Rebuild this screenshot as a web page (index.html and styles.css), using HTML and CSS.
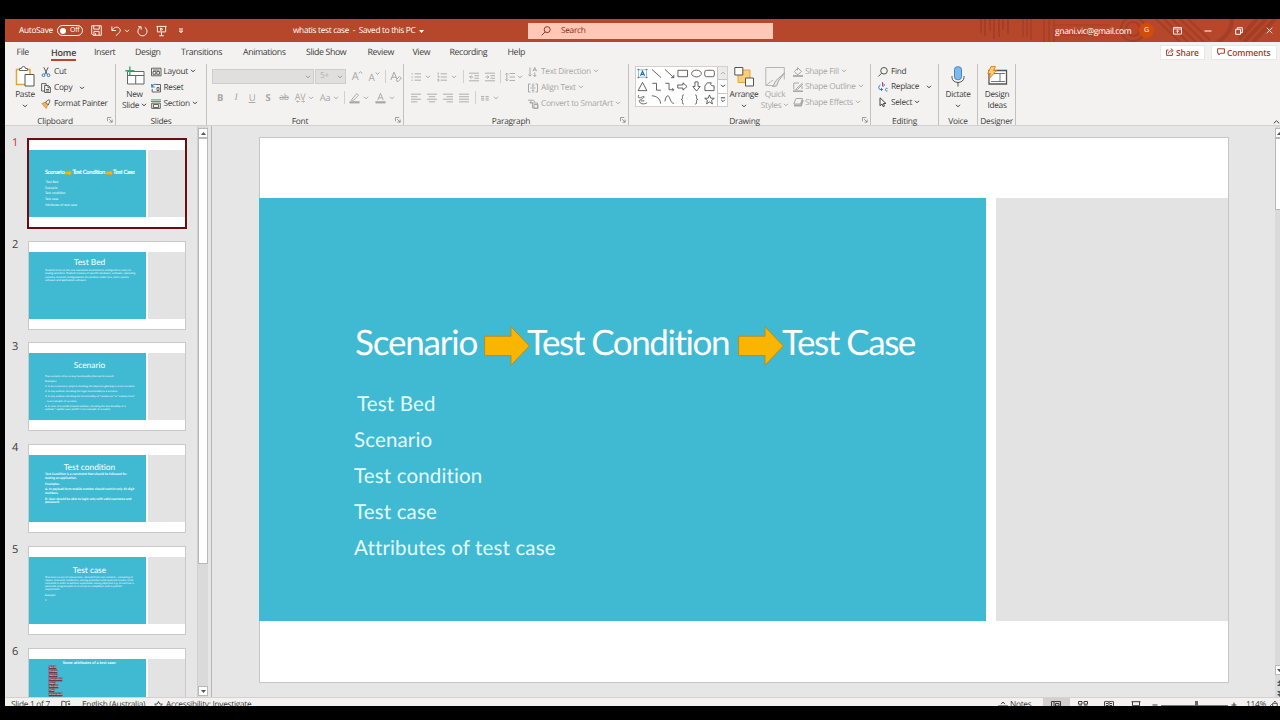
FILE: index.html
```html
<!DOCTYPE html>
<html lang="en">

<head>
	<meta charset="UTF-8">
	<meta name="viewport" content="width=device-width, initial-scale=1.0">
	<title>whatis test case - PowerPoint</title>
	<link rel="stylesheet" href="styles.css">
</head>

<body>
	<svg class="defs">
		<symbol id="chev" viewBox="0 0 6 4"><path d="M1 .8l2 2 2-2" /></symbol>
		<symbol id="launch" viewBox="0 0 7 7"><path d="M.5 5V.5H5M2.5 2.5l3.5 3.5M6 3v3H3" /></symbol>
		<symbol id="arrow" viewBox="0 0 46 40"><path d="M.6 10.2h26.4V.8L45.4 20 27 39.2V29.6H.6z" /></symbol>
	</svg>

	<div class="window">
		<header class="titlebar">
			<svg class="titlebar-art" viewBox="0 0 310 23">
				<g stroke="#9c3d24" stroke-width="2">
					<path d="M11 0v14M15 0v17M20 0v12M24 0v20M29 0v18M33 0v11M38 0v15" />
					<path d="M53 0v18M57 0v18M61 0v21M74 0v23M79 0v23M84 0v23" opacity=".8" />
				</g>
				<g fill="none" stroke="#9c3d24" stroke-width="2">
					<circle cx="163" cy="10" r="12" /><circle cx="163" cy="10" r="7" />
					<path d="M85 6h55M85 11h40M85 16h50" stroke-width="1" />
					<path d="M186 0l24 23M194 0l24 23M202 0l24 23M210 0l24 23M218 0l22 21" />
				</g>
				<path d="M262 0c0 10-6 18-14 23M305 0l-22 23M296 0l-22 23M287 0l-18 20" fill="none" stroke="#9c3d24" stroke-width="4" />
			</svg>
			<div class="quick">
				<span class="autosave">AutoSave</span>
				<span class="toggle"><i></i>Off</span>
				<svg class="q-save" viewBox="0 0 12 12"><path d="M.8.8h10.4v10.4H2.2L.8 9.800zM3 1v3.500h6V1M3.200 11V7h5.600v4M5 9v2" /></svg>
				<svg class="q-undo" viewBox="0 0 12 12"><path d="M1 1v4.500h4.500M1.300 5.200C3 2 6.500.8 8.800 2.800c2.200 2 1.200 4.200-.6 5.800L5.300 11.300" /></svg>
				<svg class="q-chev chev"><use href="#chev" /></svg>
				<svg class="q-redo" viewBox="0 0 12 12"><path d="M3.800 1.800A5 5 0 1 0 8.500 2M1.200 1.300h3.300v3.300" /></svg>
				<svg class="q-show" viewBox="0 0 12 12"><path d="M.5 1h11M1.500 1v6h9V1M6 7v4M3.500 11.200h5M5 2.700v2.800l2.300-1.400z" /></svg>
				<svg class="q-more" viewBox="0 0 6 6"><path d="M1 1h4M1.300 3L3 4.800 4.700 3z" /></svg>
			</div>
			<div class="doc-name">whatis test case&nbsp; -&nbsp; Saved to this PC <svg class="caret" viewBox="0 0 5 3"><path d="M0 0h5L2.500 3z" /></svg></div>
			<div class="search">
				<svg viewBox="0 0 11 11"><circle cx="6.800" cy="4" r="3.300" /><path d="M4.500 6.500L.8 10.300" /></svg>
				<span>Search</span>
			</div>
			<div class="account">
				<span class="mail">gnani.vic@gmail.com</span>
				<span class="avatar">G</span>
				<svg class="w-ribbon" viewBox="0 0 10 9"><path d="M.5.5h9v7.500h-9zM.5 2.300h9M5 7V3.800M3.400 5.200L5 3.600l1.600 1.600" /></svg>
				<svg class="w-min" viewBox="0 0 8 8"><path d="M.5 4h7" /></svg>
				<svg class="w-max" viewBox="0 0 8 8"><path d="M.7 2.300h4.800v5H.7zM2.300 2V.7h5v5H5.800" /></svg>
				<svg class="w-close" viewBox="0 0 8 8"><path d="M.8.8l6.400 6.400M7.200.8L.8 7.200" /></svg>
			</div>
		</header>

		<nav class="tabs">
			<span class="t-file">File</span>
			<span class="t-home active">Home</span>
			<span class="t-insert">Insert</span>
			<span class="t-design">Design</span>
			<span class="t-trans">Transitions</span>
			<span class="t-anim">Animations</span>
			<span class="t-show">Slide Show</span>
			<span class="t-review">Review</span>
			<span class="t-view">View</span>
			<span class="t-rec">Recording</span>
			<span class="t-help">Help</span>
			<div class="tab-buttons">
				<button class="b-share"><svg viewBox="0 0 8 8"><path d="M2.500 2H.6v5.400h5.800V5M2.500 5.500C2.600 3.500 4 2.600 5.500 2.600M4.700.6l2.500 2-2.500 2" /></svg>Share</button>
				<button class="b-comments"><svg viewBox="0 0 8 8"><path d="M.6.8h6.800v4.400H3.500L1.800 7V5.200H.6z" /></svg>Comments</button>
			</div>
		</nav>

		<section class="ribbon">
			<div class="group g-clipboard">
				<div class="group-body">
					<div class="big">
						<svg class="big-icon" viewBox="0 0 20 21">
							<path d="M1.500 3.500h13.500v15H1.500z" fill="#fff" stroke="#e8a23c" stroke-width="1.500" />
							<path d="M4.500 4.500v-2h2a2 2 0 0 1 4 0h2v2z" fill="#fff" stroke="#666" />
							<path d="M10 8.500h9v11.500h-9z" fill="#fff" stroke="#555" />
						</svg>
						<span>Paste</span>
						<svg class="chev"><use href="#chev" /></svg>
					</div>
					<div class="rows">
						<div class="row"><svg class="ic" viewBox="0 0 10 10"><path d="M2.800.3l3.400 7M7.200.3l-3.400 7" stroke="#555" /><circle cx="2.500" cy="8.200" r="1.400" stroke="#2f7fc1" /><circle cx="7.500" cy="8.200" r="1.400" stroke="#2f7fc1" /></svg><span>Cut</span></div>
						<div class="row"><svg class="ic" viewBox="0 0 10 10"><path d="M3.500 8H.6V.6h4.500v1.700M3.600 2.500h3.800l2 2v5h-5.800zM7 2.700v2h2.300M5 6.500h3M5 8h3" stroke="#555" stroke-width=".9" /></svg><span>Copy</span><svg class="chev wide"><use href="#chev" /></svg></div>
						<div class="row"><svg class="ic" viewBox="0 0 10 10"><path d="M.8 4.500l3.400-1.200 2.600 2.800-1.600 3.500z" fill="#f2b45c" stroke="#d9822b" stroke-width=".7" /><path d="M4.500 3l2.800 3 1.700-4.500L8 .7z" fill="#fff" stroke="#555" stroke-width=".9" /></svg><span>Format Painter</span></div>
					</div>
				</div>
				<div class="group-name with-launch">Clipboard<svg class="launch"><use href="#launch" /></svg></div>
			</div>

			<div class="group g-slides">
				<div class="group-body">
					<div class="big">
						<svg class="big-icon" viewBox="0 0 20 21">
							<path d="M2.500 5.500h16.500v12.500H2.500zM2.500 9.500H19M10.700 9.500V18" fill="#fff" stroke="#666" />
							<path d="M4.800.5v8.500M.3 4.700h9" fill="none" stroke="#3aa66a" stroke-width="1.400" />
						</svg>
						<span>New</span>
						<span>Slide <svg class="chev"><use href="#chev" /></svg></span>
					</div>
					<div class="rows">
						<div class="row"><svg class="ic" viewBox="0 0 10 10"><path d="M.5 1.200h9.500v7.600H.5zM2 3h6.500M2 4.500h2.800v2.800H2zM5.800 4.500h2.700v2.800H5.800z" stroke="#555" stroke-width=".9" /></svg><span>Layout <svg class="chev"><use href="#chev" /></svg></span></div>
						<div class="row"><svg class="ic" viewBox="0 0 10 10"><path d="M5 1.500h4.500v7.500H1.200V6M6 4.500h2v3H6z" stroke="#555" stroke-width=".9" /><path d="M.7 1v3h3M.9 3.800C1.600 1.800 3 1 4.800 1.400" stroke="#2f7fc1" stroke-width="1.100" /></svg><span>Reset</span></div>
						<div class="row"><svg class="ic" viewBox="0 0 10 10"><path d="M0 .9h10M0 2.500h10" stroke="#3aa66a" /><path d="M.7 4.200h8.600v5.200H.7zM2.500 5.500h5v3h-5z" stroke="#555" stroke-width=".9" /></svg><span>Section <svg class="chev"><use href="#chev" /></svg></span></div>
					</div>
				</div>
				<div class="group-name">Slides</div>
			</div>

			<div class="group g-font off">
				<div class="group-body stacked">
					<div class="line top">
						<div class="combo c-name"><svg class="chev"><use href="#chev" /></svg></div>
						<div class="combo c-size">5+<svg class="chev"><use href="#chev" /></svg></div>
						<span class="cell grow-a">A<svg viewBox="0 0 5 3"><path d="M.6 2.500L2.500.7l1.900 1.800" /></svg></span>
						<span class="cell shrink-a">A<svg viewBox="0 0 5 3"><path d="M.6.5l1.900 1.800L4.400.5" /></svg></span>
						<i class="sep"></i>
						<svg class="clear" viewBox="0 0 12 12"><path d="M.8 9L4 1.200 7 8M2 6.200h4M6.500 8.500l3-3 1.800 1.700-3 3.200H7z" /></svg>
					</div>
					<div class="line bottom">
						<span class="cell"><b>B</b></span>
						<span class="cell"><em>I</em></span>
						<span class="cell"><u>U</u></span>
						<span class="cell"><b>S</b></span>
						<span class="cell"><s>ab</s></span>
						<span class="cell av">AV<svg viewBox="0 0 12 4"><path d="M5 2H.8M2.300.5L.8 2l1.500 1.500M7 2h4.200M9.700.5l1.500 1.500-1.500 1.500" /></svg></span>
						<svg class="chev"><use href="#chev" /></svg>
						<span class="cell aa">Aa</span>
						<svg class="chev"><use href="#chev" /></svg>
						<i class="sep"></i>
						<svg class="pen" viewBox="0 0 12 12"><path d="M3 7.500L8.500 1.200 10.300 3 5 8.500H2.500z" /><path d="M.5 10.700h11" stroke-width="2.400" /></svg>
						<svg class="chev"><use href="#chev" /></svg>
						<svg class="pen color" viewBox="0 0 12 12"><path d="M3 8.300L6 .9l3 7.400M4 5.800h4" /><path d="M.5 10.700h11" stroke-width="2.400" /></svg>
						<svg class="chev"><use href="#chev" /></svg>
					</div>
				</div>
				<div class="group-name with-launch">Font<svg class="launch"><use href="#launch" /></svg></div>
			</div>

			<div class="group g-para off">
				<div class="group-body">
					<div class="stacked para-tools">
						<div class="line top">
							<svg class="p-ic" viewBox="0 0 11 10"><path d="M4 1.500h7M4 5h7M4 8.500h7M.5 1.500H2M.5 5H2M.5 8.500H2" /></svg>
							<svg class="chev"><use href="#chev" /></svg>
							<svg class="p-ic p-num" viewBox="0 0 11 10"><path d="M4 1.500h7M4 5h7M4 8.500h7M1.300 0v2.500M.5 4h1.500v2M.5 7.500H2v2H.5" /></svg>
							<svg class="chev"><use href="#chev" /></svg>
							<i class="sep"></i>
							<svg class="p-ic" viewBox="0 0 11 10"><path d="M0 .8h11M6 3.600h5M6 6.400h5M0 9.200h11M4.500 5H.8M2.500 3.300L.8 5l1.700 1.700" /></svg>
							<svg class="p-ic p-in" viewBox="0 0 11 10"><path d="M0 .8h11M6 3.600h5M6 6.400h5M0 9.200h11M.5 5h3.700M2.500 3.300L4.200 5 2.500 6.700" /></svg>
							<i class="sep narrow"></i>
							<svg class="p-ic" viewBox="0 0 11 10"><path d="M5 1.200h6M5 5h6M5 8.800h6M2 .8v8.400M.5 2.300L2 .8l1.500 1.500M.5 7.700L2 9.200l1.500-1.500" /></svg>
							<svg class="chev tight-chev"><use href="#chev" /></svg>
						</div>
						<div class="line bottom">
							<svg class="p-ic" viewBox="0 0 11 10"><path d="M0 .8h11M0 3.600h7M0 6.400h11M0 9.200h7" /></svg>
							<svg class="p-ic" viewBox="0 0 11 10"><path d="M0 .8h11M2 3.600h7M0 6.400h11M2 9.200h7" /></svg>
							<svg class="p-ic" viewBox="0 0 11 10"><path d="M0 .8h11M4 3.600h7M0 6.400h11M4 9.200h7" /></svg>
							<svg class="p-ic" viewBox="0 0 11 10"><path d="M0 .8h11M0 3.600h11M0 6.400h11M0 9.200h11" /></svg>
							<i class="sep"></i>
							<svg class="p-ic p-col" viewBox="0 0 11 10"><path d="M0 3.300h3.500M0 5.300h3.500M0 7.300h3.500M5 3.300h3.500M5 5.300h3.500M5 7.300h3.500" /></svg>
							<svg class="chev tight-chev"><use href="#chev" /></svg>
						</div>
					</div>
					<div class="rows">
						<div class="row"><svg class="ic" viewBox="0 0 10 10"><path d="M2 .5v8.500M.5 7.500L2 9.200l1.500-1.700M5 4.200L6.800.5l1.800 3.700M5.500 3h2.600M6.800 5.500v4M5.300 8l1.500 1.500L8.300 8" /></svg><span>Text Direction <svg class="chev"><use href="#chev" /></svg></span></div>
						<div class="row"><svg class="ic" viewBox="0 0 10 10"><path d="M2.500 1H.5v8h2M7.500 1h2v8h-2M2.500 5h5M5 .3v3M5 6.700v3M4 2.500l1 1 1-1M4 7.700l1-1 1 1" /></svg><span>Align Text <svg class="chev"><use href="#chev" /></svg></span></div>
						<div class="row"><svg class="ic" viewBox="0 0 10 10"><path d="M0 1.200h5.500L7 3M1.500 3.500h3M3 1.500V5M4.500 4h5v5h-5zM6 5.500h4v4H6z" /></svg><span>Convert to SmartArt <svg class="chev"><use href="#chev" /></svg></span></div>
					</div>
				</div>
				<div class="group-name with-launch">Paragraph<svg class="launch"><use href="#launch" /></svg></div>
			</div>

			<div class="group g-drawing">
				<div class="group-body">
					<div class="gallery">
						<div class="shapes">
							<svg viewBox="0 0 12 12"><path d="M1.500 2h9v8h-9z" stroke="#7ba7cf" /><path d="M3.800 8.500L6 3.500l2.200 5M4.500 7h3" stroke="#1f6fb5" stroke-width="1.200" /><path d="M.5 1.500h2M9.500 1.500h2M.5 10.500h2M9.500 10.500h2" stroke="#444" /></svg>
							<svg viewBox="0 0 12 12"><path d="M1 1.500l10 9" /></svg>
							<svg viewBox="0 0 12 12"><path d="M1 1.500l9.700 9M10.700 7.500v3h-3" /></svg>
							<svg viewBox="0 0 12 12"><path d="M1 2.500h10.500v7H1z" /></svg>
							<svg viewBox="0 0 12 12"><ellipse cx="6" cy="6" rx="5.300" ry="3.700" /></svg>
							<svg viewBox="0 0 12 12"><rect x=".8" y="2.500" width="10.500" height="7" rx="2" /></svg>
							<svg viewBox="0 0 12 12"><path d="M6 1.500l4.800 9H1.200z" /></svg>
							<svg viewBox="0 0 12 12"><path d="M1.500 2.500H6v7.500h4.800" /></svg>
							<svg viewBox="0 0 12 12"><path d="M1.500 2.500H5.500v7h5M9 7.800l1.700 1.700L9 11.200" /></svg>
							<svg viewBox="0 0 12 12"><path d="M.8 4.300h5.700V2L11 6l-4.500 4V7.700H.8z" /></svg>
							<svg viewBox="0 0 12 12"><path d="M4.300 1h3.400v5H10l-4 5-4-5h2.300z" /></svg>
							<svg viewBox="0 0 12 12"><path d="M3.500 2h4.500c-1.500 2-.5 3.500 3 3.200v5.300H1V5.500z" /></svg>
							<svg viewBox="0 0 12 12"><path d="M2 1c-1.500 3 0 4 3 2.500s4-.5 1 1.500S1.500 6.500 3 9s6 2 8 .5M4 7.500h4" /></svg>
							<svg viewBox="0 0 12 12"><path d="M1 2c5 0 9 3 9.500 8.500" /></svg>
							<svg viewBox="0 0 12 12"><path d="M1 8C2 2 4.500 0 6 4s3 7 5 6" /></svg>
							<svg viewBox="0 0 12 12"><path d="M7.500 1C5.500 1 6 2.500 6 4S5.500 6 4.500 6C5.500 6 6 6.500 6 8s-.5 3 1.500 3" /></svg>
							<svg viewBox="0 0 12 12"><path d="M4.500 1C6.500 1 6 2.500 6 4s.5 2 1.500 2C6.500 6 6 6.500 6 8s.5 3-1.500 3" /></svg>
							<svg viewBox="0 0 12 12"><path d="M6 1l1.400 3.500 3.800.2-3 2.400 1 3.700L6 8.700l-3.200 2.100 1-3.700-3-2.400 3.800-.2z" /></svg>
						</div>
						<div class="scroller">
							<span class="dim"><svg class="chev up"><use href="#chev" /></svg></span>
							<span><svg class="chev"><use href="#chev" /></svg></span>
							<span><svg class="more" viewBox="0 0 6 6"><path d="M.8.8h4.400M1.200 2.800L3 4.600l1.800-1.800" /></svg></span>
						</div>
					</div>
					<div class="big b-arrange">
						<svg class="big-icon" viewBox="0 0 20 21">
							<path d="M4 4h12v12.500H4z" fill="#fbce7a" stroke="#e8a23c" />
							<path d="M.8 1.500h8V9h-8zM11.500 12h8v8h-8z" fill="#fff" stroke="#555" />
						</svg>
						<span>Arrange</span>
						<svg class="chev"><use href="#chev" /></svg>
					</div>
					<div class="big b-quick off">
						<svg class="big-icon" viewBox="0 0 20 21">
							<path d="M.8 1.500h18.500v12M.8 1.500v18h9M.8 19.500L8 14" fill="none" stroke="#b5b5b5" />
							<path d="M19.500 7l-6 8-2 5-4 .5c2-1 1.500-4 3.500-6z" fill="#e4e4e4" stroke="#a8a8a8" />
						</svg>
						<span>Quick</span>
						<span>Styles <svg class="chev"><use href="#chev" /></svg></span>
					</div>
					<div class="rows tight off">
						<div class="row"><svg class="ic" viewBox="0 0 10 10"><path d="M1.500 4.500l3.500-3.500 3.500 3.500L5 7.500H4zM4.500.3v3" /><path d="M0 9h10" stroke-width="1.800" /></svg><span>Shape Fill <svg class="chev"><use href="#chev" /></svg></span></div>
						<div class="row"><svg class="ic" viewBox="0 0 10 10"><path d="M6 1H.8v6.500M9.500 1L3.500 6.500l-.8 1.500 1.800-.6L10 2M9 4v3" /><path d="M0 9.200h10" stroke-width="1.600" /></svg><span>Shape Outline <svg class="chev"><use href="#chev" /></svg></span></div>
						<div class="row"><svg class="ic" viewBox="0 0 10 10"><path d="M3 1.500h6.500L7.500 7H.8z" /><path d="M1 8.500h7l2-5.500" stroke-width="1.800" /></svg><span>Shape Effects <svg class="chev"><use href="#chev" /></svg></span></div>
					</div>
				</div>
				<div class="group-name with-launch">Drawing<svg class="launch"><use href="#launch" /></svg></div>
			</div>

			<div class="group g-editing">
				<div class="group-body">
					<div class="rows tight">
						<div class="row"><svg class="ic" viewBox="0 0 10 10"><circle cx="6" cy="3.800" r="3.300" stroke="#555" /><path d="M3.600 6.200L.3 9.500" stroke="#555" /></svg><span>Find</span></div>
						<div class="row"><svg class="ic" viewBox="0 0 10 10"><path d="M4.500 0v4.200M4.500 2.300c2.500-1 3 2 0 1.800" stroke="#9b4fb0" /><path d="M9.500 6.500C7 5.500 6.500 9.500 9.500 9" stroke="#2f7fc1" /><path d="M2.300 3C.3 4 .3 7 2 7.500h2.500M3 6l1.600 1.500L3 9" stroke="#2f7fc1" /></svg><span>Replace</span><svg class="chev wide"><use href="#chev" /></svg></div>
						<div class="row"><svg class="ic" viewBox="0 0 10 10"><path d="M2 .8v8l2-1.800 1.200 2.700 1.300-.6L5.400 6.500H8z" stroke="#444" /></svg><span>Select <svg class="chev"><use href="#chev" /></svg></span></div>
					</div>
				</div>
				<div class="group-name">Editing</div>
			</div>

			<div class="group g-voice">
				<div class="group-body">
					<div class="big">
						<svg class="big-icon" viewBox="0 0 20 21">
							<rect x="6.500" y=".7" width="7" height="13" rx="3" fill="#7fb9e8" stroke="#3f86c4" />
							<path d="M4 10v1.500a6 5 0 0 0 12 0V10M10 16.500V20.500" fill="none" stroke="#555" />
						</svg>
						<span>Dictate</span>
						<svg class="chev"><use href="#chev" /></svg>
					</div>
				</div>
				<div class="group-name">Voice</div>
			</div>

			<div class="group g-designer">
				<div class="group-body">
					<div class="big">
						<svg class="big-icon" viewBox="0 0 20 21">
							<path d="M2 4.500h17.500v13.500H2z" fill="#fff" stroke="#555" stroke-width="1.300" />
							<path d="M4 7.500h14M13 7.500v8.500M4 15.500h14" fill="none" stroke="#777" />
							<path d="M4 .5h4.500L6.500 4.500h3L2 13l1.500-5.500H.8z" fill="#fbce7a" stroke="#e07b1a" stroke-width=".9" />
						</svg>
						<span>Design</span>
						<span>Ideas</span>
					</div>
				</div>
				<div class="group-name">Designer</div>
			</div>
			<svg class="collapse" viewBox="0 0 7 4"><path d="M.8 3.300l2.700-2.500 2.700 2.500" /></svg>
		</section>

		<main class="workspace">
			<aside class="thumbs">
				<div class="thumb selected">
					<span class="num">1</span>
					<div class="mini">
						<div class="mini-main first">
							<h4>Scenario<svg><use href="#arrow" /></svg>Test Condition<svg><use href="#arrow" /></svg>Test Case</h4>
							<p>&nbsp;Test Bed</p>
							<p>Scenario</p>
							<p>Test condition</p>
							<p>Test case</p>
							<p>Attributes of test case</p>
						</div>
						<div class="mini-side"></div>
					</div>
				</div>
				<div class="thumb">
					<span class="num">2</span>
					<div class="mini">
						<div class="mini-main bed">
							<h3>Test Bed</h3>
							<p>Testbed refers to the test execution environment configured to carry on<br>testing activities. Testbed consists of specific hardware, software, operating<br>systems, network configurations the product under test, other system<br>software and application software.</p>
						</div>
						<div class="mini-side"></div>
					</div>
				</div>
				<div class="thumb">
					<span class="num">3</span>
					<div class="mini">
						<div class="mini-main scen">
							<h3>Scenario</h3>
							<p>Test scenario refers to any functionality that can be tested.</p>
							<p>Examples:</p>
							<p>1. In an ecommerce project checking the payment gateway is a test scenario.</p>
							<p>2. In any website checking the login functionality is a scenario.</p>
							<p>3. In any website checking the functionality of "contact us" or "enquiry form"</p>
							<p>&nbsp; &nbsp;is an example of scenario.</p>
							<p>4. In case of a social network website, checking the functionality of a<br>website " update your profile" is an example of scenario.</p>
						</div>
						<div class="mini-side"></div>
					</div>
				</div>
				<div class="thumb">
					<span class="num">4</span>
					<div class="mini">
						<div class="mini-main cond">
							<h3>Test condition</h3>
							<p>Test Condition is a constraint that should be followed for<br>testing an application.</p>
							<p>Examples:</p>
							<p>A. In payload form mobile number should restrict only 10 digit<br>numbers.</p>
							<p>B. User should be able to login only with valid username and<br>password.</p>
						</div>
						<div class="mini-side"></div>
					</div>
				</div>
				<div class="thumb">
					<span class="num">5</span>
					<div class="mini">
						<div class="mini-main case">
							<h3>Test case</h3>
							<p>Test case is a set of instructions , derived from test scenario , consisting of<br>inputs, execution conditions, testing procedure and expected results, to be<br>executed in order to achieve a particular testing objective e.g. to exercise a<br>particular program path or to verify its compliance with a specific<br>requirement.</p>
							<p>Example:</p>
							<p>1</p>
						</div>
						<div class="mini-side"></div>
					</div>
				</div>
				<div class="thumb">
					<span class="num">6</span>
					<div class="mini">
						<div class="mini-main attrs">
							<h5>Some attributes of a test case:</h5>
							<ul>
								<li>Test ID</li>
								<li>Module</li>
								<li>Version</li>
								<li>Precondition</li>
								<li>Steps</li>
								<li>Test data</li>
								<li>Title</li>
								<li>Actual result</li>
							</ul>
						</div>
						<div class="mini-side"></div>
					</div>
				</div>
			</aside>
			<div class="scrollbar">
				<span class="sb-btn"><svg viewBox="0 0 5 3"><path d="M0 3h5L2.500 0z" /></svg></span>
				<span class="sb-thumb"></span>
				<span class="sb-btn"><svg viewBox="0 0 5 3"><path d="M0 0h5L2.500 3z" /></svg></span>
			</div>

			<div class="stage">
				<div class="slide">
					<div class="slide-main">
						<h1>
							<span class="w1">Scenario</span>
							<svg class="s-arrow"><use href="#arrow" /></svg>
							<span class="w2">Test Condition</span>
							<svg class="s-arrow"><use href="#arrow" /></svg>
							<span class="w3">Test Case</span>
						</h1>
						<ul>
							<li class="indent">Test Bed</li>
							<li>Scenario</li>
							<li>Test condition</li>
							<li>Test case</li>
							<li>Attributes of test case</li>
						</ul>
					</div>
					<div class="slide-side"></div>
				</div>
			</div>
			<div class="edge-scroll">
				<span class="sb-btn"><svg viewBox="0 0 5 3"><path d="M0 3h5L2.500 0z" /></svg></span>
				<span class="sb-thumb"></span>
				<span class="sb-btn"><svg viewBox="0 0 5 3"><path d="M0 0h5L2.500 3z" /></svg></span>
				<svg class="jump" viewBox="0 0 6 6"><path d="M0 3l3-3 3 3zM0 6l3-3 3 3z" /></svg>
				<svg class="jump" viewBox="0 0 6 6"><path d="M0 0l3 3 3-3zM0 3l3 3 3-3z" /></svg>
			</div>
		</main>

		<footer class="status">
			<span class="s-count">Slide 1 of 7</span>
			<svg class="s-book" viewBox="0 0 11 10"><path d="M5.500 2v7.500M5.500 2C4 .8 2.500.8.800 1v7.500h9.500V6M5.500 2C6.500 1 8 .8 10 1M8 3l2 2M10 3L8 5" /></svg>
			<span class="s-lang">English (Australia)</span>
			<svg class="s-acc" viewBox="0 0 10 10"><path d="M5 .5l1.300 2.700 3 .4-2.200 2L8 9 5 7.300 2 9l.9-3.400-2.200-2 3-.4z" /></svg>
			<span class="s-inv">Accessibility: Investigate</span>
			<div class="status-right">
				<svg class="s-up" viewBox="0 0 10 8"><path d="M0 5h10M3 3.200L5 1l2 2.200M2 7h6" /></svg>
				<span class="s-notes">Notes</span>
				<span class="view on"><svg viewBox="0 0 10 8"><path d="M.5.5h9v7h-9zM3 .5v7M4.500 2.500h3.500v2.500H4.500z" /></svg></span>
				<span class="view"><svg viewBox="0 0 10 8"><path d="M.5.5h3.500v2.700H.5zM6 .5h3.500v2.700H6zM.5 5h3.500v2.700H.5zM6 5h3.500v2.700H6z" /></svg></span>
				<span class="view"><svg viewBox="0 0 10 8"><path d="M5 1v6.500M5 1C3.500.3 2 .3.600.6v6.500H5M5 1C6.500.3 8 .3 9.400.6v6.500H5M2 2.500h2M2 4.500h2M6 2.500h2M6 4.500h2" /></svg></span>
				<span class="view"><svg viewBox="0 0 10 8"><path d="M.5.7h9M1.500.7v4h7v-4M5 4.700V7M3 7.500h4" /></svg></span>
				<svg class="s-minus" viewBox="0 0 6 6"><path d="M.5 3h5" /></svg>
				<span class="zoombar"><i></i></span>
				<svg class="s-minus" viewBox="0 0 6 6"><path d="M.5 3h5M3 .5v5" /></svg>
				<span class="s-zoom">114%</span>
				<svg class="s-fit" viewBox="0 0 10 10"><path d="M3 2.500h5v5H3zM2 3.500L.5 5 2 6.500M4 1.500L5.500.3 7 1.500" /></svg>
			</div>
		</footer>
	</div>
</body>

</html>
```

FILE: styles.css
```css
body {
	margin: 0;
	background: #000;
	font-family: "Open Sans", "Noto Sans", sans-serif;
	font-size: 8.3px;
	line-height: 1;
	letter-spacing: -.3px;
	text-rendering: geometricPrecision;
	color: #3d3d3d;
	overflow: hidden;
}

svg {
	display: block;
	flex: none;
	fill: none;
	stroke: currentColor;
	overflow: visible;
}

.defs {
	position: absolute;
	width: 0;
	height: 0;
}

h1, h3, h4, h5, p, ul {
	margin: 0;
	padding: 0;
	font-weight: 400;
	list-style: none;
}

.window {
	width: 1275px;
	height: 687px;
	margin: 19px 0 0 5px;
	background: #f3f2f1;
	overflow: hidden;
	display: flex;
	flex-direction: column;
}

.chev {
	width: 6px;
	height: 4px;
}

.chev.up {
	transform: scaleY(-1);
}

.row .chev,
.big span .chev {
	display: inline-block;
	vertical-align: 1px;
}

/* title bar */
.titlebar {
	position: relative;
	flex: none;
	height: 23px;
	background: #b7472a;
	color: #fff;
	display: flex;
	align-items: center;
}

.titlebar-art {
	position: absolute;
	right: 0;
	top: 0;
	width: 310px;
	height: 23px;
	overflow: hidden;
	opacity: .7;
}

.quick {
	display: flex;
	align-items: center;
	width: 288px;
}

.autosave {
	width: 38px;
	padding: 2px 0 0 14px;
	white-space: nowrap;
}

.toggle {
	box-sizing: border-box;
	width: 26px;
	height: 11px;
	border: 1px solid #fff;
	border-radius: 6px;
	display: flex;
	align-items: center;
	font-size: 7px;
	gap: 4px;
	padding-left: 2px;
}

.toggle i {
	width: 6px;
	height: 6px;
	border-radius: 50%;
	background: #fff;
}

.q-save { width: 11px; height: 11px; margin-left: 8px; }
.q-undo { width: 11px; height: 12px; margin-left: 9px; }
.q-chev { margin-left: 2px; }
.q-redo { width: 11px; height: 12px; margin-left: 7px; }
.q-show { width: 11px; height: 12px; margin-left: 8px; }
.q-more { width: 6px; height: 6px; margin-left: 11px; }

.doc-name {
	display: flex;
	align-items: center;
	width: 235px;
	padding-top: 2px;
	white-space: nowrap;
	letter-spacing: -.32px;
}

.caret {
	width: 5px;
	height: 3px;
	margin-left: 4px;
	fill: currentColor;
	stroke: none;
}

.search {
	box-sizing: border-box;
	width: 245px;
	height: 16px;
	padding-left: 13px;
	background: #ffc7b5;
	color: #8b2a12;
	display: flex;
	align-items: center;
	gap: 10px;
}

.search span {
	padding-top: 2px;
}

.search svg {
	width: 10px;
	height: 10px;
}

.account {
	position: relative;
	margin-left: auto;
	display: flex;
	align-items: center;
}

.mail {
	width: 84px;
	padding-top: 1px;
	font-size: 8.6px;
	letter-spacing: -.4px;
}

.avatar {
	width: 15px;
	height: 15px;
	margin-right: 19px;
	border-radius: 50%;
	background: #cf4f0a;
	font-size: 7px;
	line-height: 15px;
	text-align: center;
}

.w-ribbon { width: 9px; height: 8px; }
.w-min { width: 8px; height: 8px; margin-left: 22px; }
.w-max { width: 8px; height: 8px; margin-left: 23px; }
.w-close { width: 7px; height: 7px; margin: 0 7px 0 23px; }

/* tabs */
.tabs {
	flex: none;
	height: 20px;
	display: flex;
	align-items: center;
	font-size: 8.8px;
	letter-spacing: -.4px;
	white-space: nowrap;
	padding-left: 11.5px;
}

.tabs > span {
	box-sizing: border-box;
	height: 18px;
	line-height: 19px;
}

.t-file { width: 34.5px; }
.tabs .t-home { width: 25px; margin-right: 18px; }
.t-insert { width: 41px; }
.t-design { width: 46px; }
.t-trans { width: 62px; }
.t-anim { width: 63px; }
.t-show { width: 61.5px; }
.t-review { width: 45px; }
.t-view { width: 37px; }
.t-rec { width: 58px; }

.tabs .active {
	font-weight: 600;
	font-size: 9px;
	letter-spacing: -.2px;
	border-bottom: 2px solid #b7472a;
}

.tab-buttons {
	margin-left: auto;
	display: flex;
	gap: 6px;
	padding-right: 3px;
}

.tab-buttons button {
	box-sizing: border-box;
	height: 15px;
	padding: 0 0 0 5px;
	border: 1px solid #eae8e6;
	background: #fff;
	color: #a4402a;
	font: 600 8.5px "Open Sans", sans-serif;
	letter-spacing: -.15px;
	display: flex;
	align-items: center;
	gap: 2px;
}

.tab-buttons svg {
	width: 8px;
	height: 8px;
}

.b-share { width: 45px; }
.b-comments { width: 66px; }

/* ribbon */
.ribbon {
	flex: none;
	height: 64px;
	display: flex;
	position: relative;
	white-space: nowrap;
	border-bottom: 1px solid #d4d2d0;
	box-sizing: border-box;
}

.group {
	box-sizing: border-box;
	height: 61px;
	margin-top: 2px;
	border-right: 1px solid #c3c1bf;
	display: flex;
	flex-direction: column;
}

.group-body {
	flex: 1;
	display: flex;
	align-items: flex-start;
}

.group-name {
	height: 9px;
	line-height: 11px;
	text-align: center;
	position: relative;
	font-size: 8.4px;
	letter-spacing: -.25px;
}

.with-launch {
	padding-right: 10px;
}

.off .group-name {
	color: #3d3d3d;
}

.launch {
	position: absolute;
	right: 2px;
	top: 1px;
	width: 6px;
	height: 6px;
	stroke: #888;
}

.off {
	color: #a9a7a5;
}

.g-clipboard { width: 111px; }
.g-slides { width: 91px; }
.g-font { width: 197px; }
.g-para { width: 225px; }
.g-drawing { width: 242px; }
.g-editing { width: 68px; }
.g-voice { width: 39px; }
.g-designer { width: 38px; }

.big {
	width: 32px;
	display: flex;
	flex-direction: column;
	align-items: center;
	padding-top: 2px;
}

.big-icon {
	width: 20px;
	height: 21px;
	margin-bottom: 3px;
}

.big > span {
	height: 11px;
	line-height: 10px;
}

.big > .chev {
	margin-top: 3px;
}

.g-clipboard .big { margin-left: 4px; }
.g-slides .big { margin-left: 2px; width: 33px; }
.g-voice .big { margin-left: 3px; }
.g-designer .big { margin-left: 3px; }

.rows {
	display: flex;
	flex-direction: column;
}

.row {
	height: 16px;
	display: flex;
	align-items: center;
	gap: 3px;
}

.row span {
	padding-top: 1px;
}

.tight .row {
	height: 15.3px;
}

.ic {
	width: 10px;
	height: 10px;
}

.row .chev.wide {
	margin-left: 4px;
}

.g-editing .rows { margin-left: 7px; }
.g-slides .row { gap: 2.5px; }
.g-drawing .row { gap: 2px; }

/* font + paragraph tools */
.stacked {
	flex-direction: column;
}

.line {
	display: flex;
	align-items: center;
	height: 21px;
}

.line.top {
	padding-top: 2px;
}

.g-font .line {
	padding-left: 5px;
}

.combo {
	box-sizing: border-box;
	height: 15px;
	padding: 0 2px 0 4px;
	border: 1px solid #cfcdcb;
	background: #e1dfdd;
	display: flex;
	align-items: center;
	color: #b5b3b1;
}

.combo .chev {
	margin-left: auto;
	stroke: #999;
}

.c-name { width: 102px; margin-right: 1px; }
.c-size { width: 31px; margin-right: 3px; }

.cell {
	width: 16px;
	text-align: center;
	font-size: 9.5px;
}

.cell em {
	font-family: "Liberation Serif", serif;
}

.cell s {
	font-size: 8.5px;
}

.grow-a,
.shrink-a {
	display: flex;
	justify-content: center;
}

.grow-a { font-size: 11px; width: 17px; }
.shrink-a { font-size: 10px; }

.grow-a svg,
.shrink-a svg {
	width: 5px;
	height: 3px;
}

.sep {
	width: 1px;
	height: 13px;
	background: #d2d0ce;
}

.g-font .top .sep { margin: 0 4px 0 3px; }
.clear { width: 12px; height: 12px; }
.g-font .bottom .sep { margin: 0 4px 0 5px; }

.av {
	font-size: 9px;
	letter-spacing: -.3px;
}

.av svg {
	width: 11px;
	height: 3px;
	margin: -1px auto 0;
}

.aa { margin-left: 3px; }

.pen {
	width: 11px;
	height: 12px;
}

.pen + .chev { margin-left: 3px; }
.pen.color { margin-left: 6px; }

.para-tools {
	display: flex;
	flex: none;
	box-sizing: border-box;
	width: 124px;
	padding-left: 7px;
}

.p-ic {
	width: 10px;
	height: 10px;
}

.p-ic + .chev { margin-left: 4px; }
.p-num { margin-left: 6px; }
.para-tools .sep { margin: 0 5px 0 6px; }
.para-tools .sep.narrow { margin: 0 4px 0 5px; }
.p-in { margin-left: 6px; }
.para-tools .bottom .p-ic + .p-ic { margin-left: 6px; }
.p-ic + .tight-chev { margin-left: 2px; }

/* drawing */
.gallery {
	box-sizing: border-box;
	width: 93px;
	height: 41px;
	margin: 2px 0 0 6px;
	border: 1px solid #d2d0ce;
	background: #fff;
	display: flex;
	justify-content: space-between;
}

.shapes {
	display: grid;
	grid-template-columns: repeat(6, 13.4px);
	grid-template-rows: repeat(3, 13px);
	place-items: center;
	color: #444;
}

.shapes svg {
	width: 11px;
	height: 11px;
	stroke-width: .9;
}

.scroller {
	width: 9px;
	display: flex;
	flex-direction: column;
	border-left: 1px solid #c8c6c4;
}

.scroller span {
	flex: 1;
	display: flex;
	align-items: center;
	justify-content: center;
	border-bottom: 1px solid #c8c6c4;
	color: #444;
}

.scroller span:last-child {
	border-bottom: 0;
}

.scroller .dim {
	background: #eceae8;
	color: #aaa;
}

.more {
	width: 6px;
	height: 6px;
}

.b-quick { width: 30px; }
.g-drawing .rows { margin-left: 3px; }

.collapse {
	position: absolute;
	right: 0;
	bottom: 1px;
	width: 7px;
	height: 4px;
}

/* workspace */
.workspace {
	flex: none;
	height: 571px;
	display: flex;
	background: #e6e6e6;
}

.thumbs {
	flex: none;
	width: 193px;
	padding-top: 12px;
	box-sizing: border-box;
	overflow: hidden;
	border-right: 1px solid #cfcfcf;
}

.thumb {
	display: flex;
	height: 101.8px;
	padding-left: 7px;
}

.num {
	width: 16px;
	font-size: 11px;
	line-height: 10px;
}

.mini {
	box-sizing: border-box;
	width: 158px;
	height: 89px;
	margin-top: .8px;
	border: 1px solid #c9c9c9;
	background: #fff;
	padding: 10px 0;
	display: flex;
	justify-content: space-between;
	font-family: Lato, sans-serif;
	font-variant-ligatures: none;
	letter-spacing: 0;
	color: #fff;
}

.selected .num {
	color: #c8392b;
}

.selected .mini {
	outline: 2px solid #6b0d12;
	outline-offset: -1px;
}

.mini-main {
	box-sizing: border-box;
	width: 117px;
	height: 67px;
	padding-left: 16px;
	background: #40b9d3;
	overflow: hidden;
	white-space: nowrap;
	font-size: 3px;
	line-height: 3.3px;
}

.mini-side {
	width: 37px;
	height: 67px;
	background: #e3e3e3;
}

.mini-main h3 {
	font-size: 8.4px;
	line-height: 10px;
	padding-right: 12px;
	text-align: center;
}

.first h4 {
	display: flex;
	align-items: center;
	font-size: 5.8px;
	line-height: 6px;
	padding-top: 20px;
	margin-bottom: 4px;
	letter-spacing: -.3px;
	-webkit-text-stroke: .15px #fff;
}

.first h4 svg {
	width: 7px;
	height: 6px;
	margin: 0 .5px;
	fill: #f9b500;
	stroke: #c08a00;
}

.first p {
	line-height: 5.8px;
	font-size: 3.3px;
}

.bed h3 { padding-top: 5.5px; margin-bottom: 2px; }
.bed { font-size: 2.75px; line-height: 3.2px; }
.scen h3 { padding-top: 7px; margin-bottom: 4.5px; }
.scen { font-size: 2.7px; line-height: 3px; }
.scen p { margin-bottom: 2.1px; }
.cond h3 { padding-top: 7px; margin-bottom: 1px; }
.cond { font-size: 3.25px; line-height: 3.7px; }
.cond p { font-weight: 700; margin-bottom: 2px; }
.case h3 { padding-top: 8px; margin-bottom: 1px; }
.case { font-size: 2.72px; line-height: 3.1px; }
.case p { margin-bottom: 2.3px; }

.attrs h5 {
	padding: 2px 12px 1px 0;
	font-size: 4px;
	line-height: 4px;
	font-weight: 700;
	text-align: center;
}

.attrs ul {
	padding-left: 4px;
	display: flex;
	flex-direction: column;
	align-items: flex-start;
	font-size: 2.4px;
	line-height: 3px;
}

.attrs li {
	height: 3px;
	margin-bottom: .95px;
	background: #6d3b48;
	box-shadow: 0 0 0 .4px #8a4450;
}

.scrollbar {
	flex: none;
	box-sizing: border-box;
	width: 14px;
	padding: 2px 3px 1px 0;
	border-right: 1px solid #b5b5b5;
	background: linear-gradient(90deg, #dadada 10px, #e6e6e6 10px);
	display: flex;
	flex-direction: column;
}

.sb-btn,
.sb-thumb {
	box-sizing: border-box;
	background: #fff;
	border: 1px solid #b9b9b9;
}

.sb-btn {
	height: 10px;
	display: flex;
	align-items: center;
	justify-content: center;
}

.sb-btn svg {
	width: 5px;
	height: 3px;
	fill: #555;
	stroke: none;
}

.scrollbar .sb-thumb {
	height: 426px;
	margin-bottom: auto;
}

.stage {
	flex: none;
	width: 1063px;
	padding: 11px 0 0 47px;
	box-sizing: border-box;
}

.slide {
	box-sizing: border-box;
	width: 970px;
	height: 546px;
	padding: 60px 0;
	border: 1px solid #c6c6c6;
	background: #fff;
	display: flex;
	justify-content: space-between;
	font-family: Lato, sans-serif;
	font-variant-ligatures: none;
}

.slide-main {
	box-sizing: border-box;
	width: 727px;
	height: 423px;
	margin-left: -1px;
	padding: 123px 0 0 96px;
	background: #40b9d3;
	color: #fff;
}

.slide-side {
	width: 232px;
	height: 423px;
	background: #e3e3e3;
}

.slide h1 {
	display: flex;
	align-items: center;
	height: 44px;
	font-size: 35px;
	line-height: 40px;
	white-space: nowrap;
	letter-spacing: -1.45px;
}

.slide h1 span {
	padding-bottom: 2px;
}

.w1 {
	width: 129px;
}

.slide .w1 {
	letter-spacing: -1.2px;
}

.s-arrow {
	width: 46px;
	height: 40px;
	margin-top: 5px;
	fill: #f9b500;
	stroke: #b98d1c;
}

.w2 {
	width: 211px;
	margin-left: -3px;
}

.w3 {
	margin-left: -2px;
}

.slide ul {
	margin: 21px 0 0 -1px;
	font-size: 20.5px;
	line-height: 36.1px;
	color: #e6fbff;
	letter-spacing: .15px;
}

.slide .indent {
	padding-left: 3px;
}

.edge-scroll {
	flex: none;
	width: 8px;
	padding-top: 2px;
	box-sizing: border-box;
	background: #dadada;
	display: flex;
	flex-direction: column;
}

.edge-scroll .sb-thumb {
	height: 72px;
	margin-bottom: auto;
}

.jump {
	width: 6px;
	height: 6px;
	margin: 5px 0 0 2px;
	fill: #555;
	stroke: none;
}

/* status bar */
.status {
	flex: none;
	height: 15px;
	display: flex;
	align-items: center;
	padding-left: 6px;
	background: #f3f2f1;
	border-top: 1px solid #d4d2d0;
	box-sizing: border-box;
	white-space: nowrap;
	letter-spacing: -.28px;
}

.s-count { width: 50px; }
.s-book { width: 10px; height: 10px; margin-right: 11px; }
.s-lang { width: 72px; }
.s-acc { width: 9px; height: 9px; margin-right: 3px; }

.status-right {
	margin-left: auto;
	display: flex;
	align-items: center;
	padding-right: 1px;
}

.s-up { width: 10px; height: 8px; }
.s-notes { width: 33px; margin-left: 2px; }

.view {
	width: 26.5px;
	height: 15px;
	display: flex;
	align-items: center;
	justify-content: center;
}

.view.on {
	background: #d2d0ce;
}

.view svg {
	width: 10px;
	height: 8px;
}

.s-minus { width: 6px; height: 6px; margin: 0 3px; }

.zoombar {
	width: 67px;
	height: 1px;
	background: #777;
}

.zoombar i {
	display: block;
	width: 3px;
	height: 8px;
	margin: -4px 0 0 34px;
	background: #666;
}

.s-zoom { width: 24px; margin-left: 6px; }
.s-fit { width: 9px; height: 9px; }
```
